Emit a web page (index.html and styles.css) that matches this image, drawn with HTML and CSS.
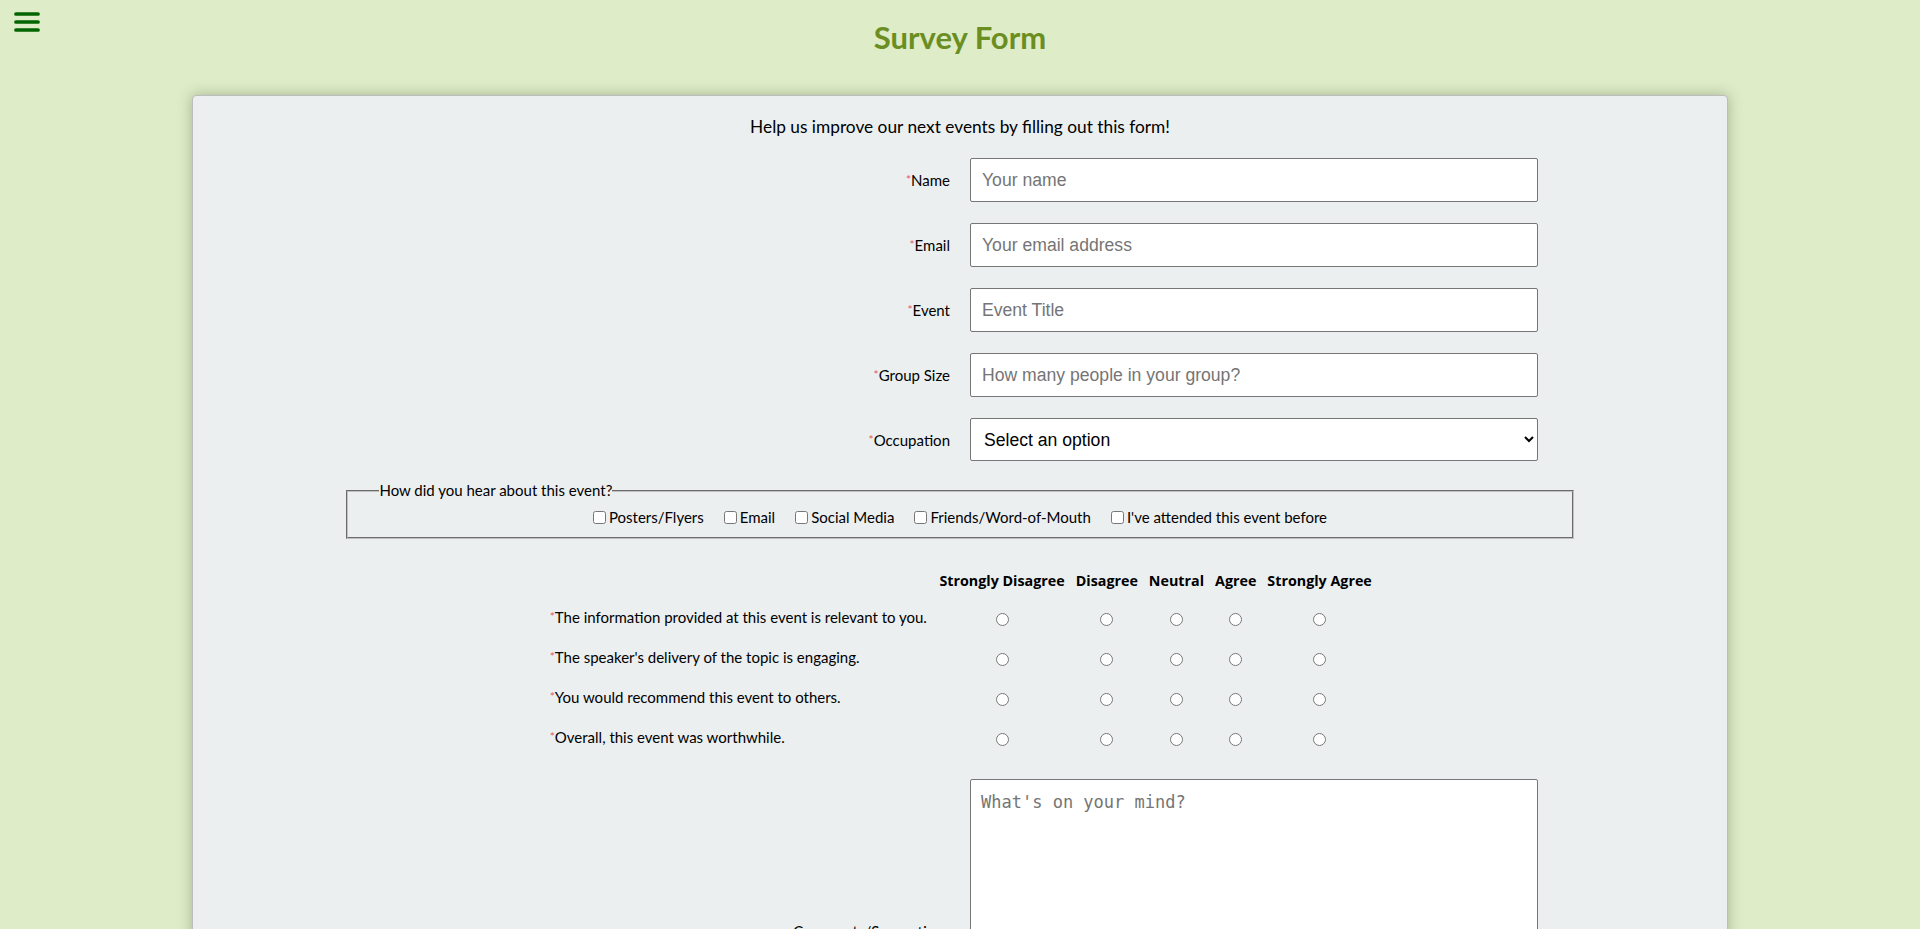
FILE: index.html
```html
<!DOCTYPE html>
<html lang="en">
<head>
<meta charset="utf-8">
<title>Survey Form</title>
<link rel="stylesheet" href="styles.css">
</head>
<body>
<button class="menu-toggle" type="button" aria-label="Open menu">
  <svg class="menu-icon" width="26" height="21" viewBox="0 0 26 21">
    <line x1="2" y1="2" x2="24" y2="2"/>
    <line x1="2" y1="10" x2="24" y2="10"/>
    <line x1="2" y1="18" x2="24" y2="18"/>
  </svg>
</button>
<header class="page-header">
  <h1 class="title">Survey Form</h1>
</header>
<main class="card">
  <p class="intro">Help us improve our next events by filling out this form!</p>
  <form class="survey">
    <div class="fields">
      <div class="field">
        <label class="field-label" for="name"><span class="req">*</span>Name</label>
        <div class="field-control"><input id="name" class="text-input" type="text" placeholder="Your name"></div>
      </div>
      <div class="field">
        <label class="field-label" for="email"><span class="req">*</span>Email</label>
        <div class="field-control"><input id="email" class="text-input" type="email" placeholder="Your email address"></div>
      </div>
      <div class="field">
        <label class="field-label" for="event"><span class="req">*</span>Event</label>
        <div class="field-control"><input id="event" class="text-input" type="text" placeholder="Event Title"></div>
      </div>
      <div class="field">
        <label class="field-label" for="group"><span class="req">*</span>Group Size</label>
        <div class="field-control"><input id="group" class="text-input" type="text" placeholder="How many people in your group?"></div>
      </div>
      <div class="field">
        <label class="field-label" for="occupation"><span class="req">*</span>Occupation</label>
        <div class="field-control">
          <select id="occupation" class="select-input">
            <option>Select an option</option>
            <option>Student</option>
            <option>Professional</option>
            <option>Other</option>
          </select>
        </div>
      </div>
    </div>

    <fieldset class="sources">
      <legend class="sources-legend">How did you hear about this event?</legend>
      <div class="source-list">
        <label class="source"><input type="checkbox" class="check">Posters/Flyers</label>
        <label class="source"><input type="checkbox" class="check">Email</label>
        <label class="source"><input type="checkbox" class="check">Social Media</label>
        <label class="source"><input type="checkbox" class="check">Friends/Word-of-Mouth</label>
        <label class="source"><input type="checkbox" class="check">I've attended this event before</label>
      </div>
    </fieldset>

    <table class="rating">
      <thead>
        <tr>
          <th class="q-head"></th>
          <th class="opt-head">Strongly Disagree</th>
          <th class="opt-head">Disagree</th>
          <th class="opt-head">Neutral</th>
          <th class="opt-head">Agree</th>
          <th class="opt-head">Strongly Agree</th>
        </tr>
      </thead>
      <tbody>
        <tr>
          <td class="question"><span class="req">*</span>The information provided at this event is relevant to you.</td>
          <td class="opt"><input type="radio" name="q1" class="radio"></td>
          <td class="opt"><input type="radio" name="q1" class="radio"></td>
          <td class="opt"><input type="radio" name="q1" class="radio"></td>
          <td class="opt"><input type="radio" name="q1" class="radio"></td>
          <td class="opt"><input type="radio" name="q1" class="radio"></td>
        </tr>
        <tr>
          <td class="question"><span class="req">*</span>The speaker's delivery of the topic is engaging.</td>
          <td class="opt"><input type="radio" name="q2" class="radio"></td>
          <td class="opt"><input type="radio" name="q2" class="radio"></td>
          <td class="opt"><input type="radio" name="q2" class="radio"></td>
          <td class="opt"><input type="radio" name="q2" class="radio"></td>
          <td class="opt"><input type="radio" name="q2" class="radio"></td>
        </tr>
        <tr>
          <td class="question"><span class="req">*</span>You would recommend this event to others.</td>
          <td class="opt"><input type="radio" name="q3" class="radio"></td>
          <td class="opt"><input type="radio" name="q3" class="radio"></td>
          <td class="opt"><input type="radio" name="q3" class="radio"></td>
          <td class="opt"><input type="radio" name="q3" class="radio"></td>
          <td class="opt"><input type="radio" name="q3" class="radio"></td>
        </tr>
        <tr>
          <td class="question"><span class="req">*</span>Overall, this event was worthwhile.</td>
          <td class="opt"><input type="radio" name="q4" class="radio"></td>
          <td class="opt"><input type="radio" name="q4" class="radio"></td>
          <td class="opt"><input type="radio" name="q4" class="radio"></td>
          <td class="opt"><input type="radio" name="q4" class="radio"></td>
          <td class="opt"><input type="radio" name="q4" class="radio"></td>
        </tr>
      </tbody>
    </table>

    <div class="field field-tall">
      <label class="field-label" for="comments">Comments/Suggestions</label>
      <div class="field-control"><textarea id="comments" class="text-area" placeholder="What's on your mind?"></textarea></div>
    </div>

    <div class="actions">
      <button class="submit" type="submit">Submit</button>
    </div>
  </form>
</main>
</body>
</html>
```

FILE: styles.css
```css
* {
  box-sizing: border-box;
}

body {
  margin: 0;
  background: #deecc8;
  font-family: Lato, "Open Sans", sans-serif;
  color: #000;
}

.menu-toggle {
  position: absolute;
  left: 14px;
  top: 12px;
  padding: 0;
  margin: 0;
  border: 0;
  background: transparent;
  cursor: pointer;
  line-height: 0;
}

.menu-icon line {
  stroke: #006400;
  stroke-width: 3.7;
  stroke-linecap: round;
}

.page-header {
  padding-top: 19px;
  height: 95px;
}

.title {
  margin: 0;
  text-align: center;
  color: #6b8e23;
  font-family: Lato, sans-serif;
  font-weight: 700;
  font-size: 31px;
  line-height: 36px;
}

.card {
  width: 80%;
  margin: 0 auto 40px;
  background: #ebeff0;
  border: 1px solid #bdbdbd;
  border-radius: 4px;
  box-shadow: 0 0 14px rgba(60, 70, 40, 0.35);
  padding: 21px 0 40px;
}

.intro {
  margin: 0;
  text-align: center;
  font-size: 17.3px;
  line-height: 19px;
}

.fields {
  display: flex;
  flex-direction: column;
  gap: 21px;
  margin-top: 22px;
}

.field {
  display: grid;
  grid-template-columns: 1fr 1fr;
  column-gap: 20px;
  align-items: center;
}

.field-label {
  text-align: right;
  font-size: 15px;
  line-height: 18px;
}

.req {
  color: #e35b5b;
  font-size: 12px;
  vertical-align: 2px;
}

.text-input,
.select-input,
.text-area {
  width: 75%;
  border: 1px solid #767676;
  border-radius: 2px;
  background: #fff;
  font-family: "Liberation Sans", Arial, sans-serif;
  font-size: 17.6px;
  color: #000;
}

.text-input {
  height: 44px;
  padding: 0 11px;
}

.select-input {
  height: 43px;
  padding: 0 9px;
}

.text-input::placeholder,
.text-area::placeholder {
  color: #757575;
}

.sources {
  width: 80%;
  margin: 21px auto 0;
  padding: 9px 12px 10px;
  border: 2px groove #c0c0c0;
  font-size: 15px;
}

.sources-legend {
  padding: 0;
  margin-left: 19px;
  line-height: 17px;
}

.source-list {
  display: flex;
  justify-content: center;
  gap: 20px;
  line-height: 19px;
}

.source {
  display: inline-flex;
  align-items: center;
}

.check {
  margin: 0 3px 0 0;
  width: 13px;
  height: 13px;
}

.rating {
  margin: 32px auto 0;
  border-spacing: 2px;
  font-size: 15px;
}

.opt-head {
  font-family: "Open Sans", sans-serif;
  font-weight: 700;
  font-size: 14.3px;
  line-height: 16px;
  padding: 0 4.5px 7px;
  text-align: center;
  white-space: nowrap;
}

.question {
  text-align: left;
  line-height: 18px;
  padding: 10px 6px;
  white-space: nowrap;
}

.opt {
  text-align: center;
  padding: 10px 5px;
  line-height: 18px;
}

.radio {
  margin: 0;
  width: 13px;
  height: 13px;
  vertical-align: middle;
}

.field-tall {
  margin-top: 21px;
}

.text-area {
  display: block;
  height: 304px;
  padding: 12px 10px;
  font-family: "DejaVu Sans Mono", "Liberation Mono", monospace;
  font-size: 17px;
  resize: vertical;
}

.actions {
  display: flex;
  justify-content: center;
  margin-top: 24px;
}

.submit {
  font-family: Lato, sans-serif;
  font-size: 16px;
  padding: 8px 24px;
  border: 1px solid #767676;
  border-radius: 3px;
  background: #6b8e23;
  color: #fff;
}
```
